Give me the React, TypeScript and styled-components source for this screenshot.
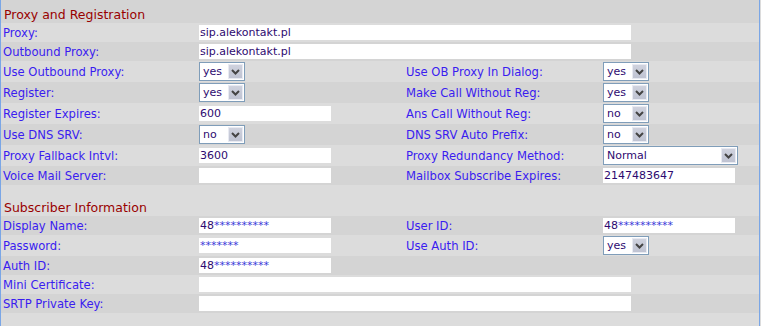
import React, { FC } from 'react';
import styled, { createGlobalStyle } from 'styled-components';

const GlobalStyle = createGlobalStyle`
  body {
    margin: 0;
    background: #dcdcdc;
    font-family: Verdana, "DejaVu Sans", sans-serif;
  }
`;

type Shade = 'dark' | 'light';

const bg = (s: Shade) => (s === 'dark' ? '#d4d4d4' : '#dcdcdc');

const Panel = styled.div`
  width: 758px;
  border-left: 1px solid #7aa6e6;
  border-right: 1px solid #7aa6e6;
  background: #dcdcdc;
  min-height: 326px;
`;

const SectionTitle = styled.div<{ $shade: Shade; $pad: number }>`
  background: ${(p) => bg(p.$shade)};
  padding: ${(p) => p.$pad}px 0 0 3px;
  height: 16px;
  font-size: 12.5px;
  line-height: 16px;
  color: #990000;
`;

const Row = styled.div<{ $shade: Shade }>`
  display: grid;
  grid-template-columns: 198px 205px 199px 1fr;
  align-items: center;
  min-height: 19px;
  box-sizing: border-box;
  padding: 1px 0;
  background: ${(p) => bg(p.$shade)};
`;

const Label = styled.div`
  font-size: 11.6px;
  color: #3a1cf0;
  padding-left: 2px;
  white-space: nowrap;
`;

const Field = styled.div<{ $wide?: boolean; $w: number }>`
  grid-column: ${(p) => (p.$wide ? 'span 2' : 'auto')};
  width: ${(p) => p.$w}px;
  height: 15px;
  background: #fff;
  font-size: 11px;
  line-height: 15px;
  color: #2e0a70;
  padding-left: 1px;
  box-sizing: border-box;
  white-space: nowrap;
  overflow: hidden;
`;

const Stars = styled.span`
  color: #3a3ad8;
`;

const SelectBox = styled.div<{ $w: number }>`
  width: ${(p) => p.$w}px;
  height: 19px;
  box-sizing: border-box;
  border: 1px solid #7f9db9;
  background: #fff;
  display: flex;
  align-items: center;
  justify-content: space-between;
  padding: 0 1px 0 3px;
  font-size: 11px;
  color: #2e0a70;
`;

const ArrowBtn = styled.div`
  width: 15px;
  height: 15px;
  box-sizing: border-box;
  border: 1px solid #e8eaf2;
  background: linear-gradient(#cfd2de, #bfc3d2);
  display: flex;
  align-items: center;
  justify-content: center;
`;

const Select: FC<{ value: string; w?: number }> = ({ value, w = 46 }) => (
  <SelectBox $w={w}>
    <span>{value}</span>
    <ArrowBtn>
      <svg width="9" height="6" viewBox="0 0 9 6">
        <path d="M1 1 L4.5 4.5 L8 1" fill="none" stroke="#444" strokeWidth="2" />
      </svg>
    </ArrowBtn>
  </SelectBox>
);

const Spacer = styled.div`
  height: 15px;
  background: #dcdcdc;
`;

const Masked: FC<{ prefix?: string; stars: number }> = ({ prefix, stars }) => (
  <>
    {prefix}
    <Stars>{'*'.repeat(stars)}</Stars>
  </>
);

export default function App() {
  return (
    <Panel>
      <GlobalStyle />
      <SectionTitle $shade="dark" $pad={7}>Proxy and Registration</SectionTitle>
      <Row $shade="light">
        <Label>Proxy:</Label>
        <Field $wide $w={432}>sip.alekontakt.pl</Field>
      </Row>
      <Row $shade="dark">
        <Label>Outbound Proxy:</Label>
        <Field $wide $w={432}>sip.alekontakt.pl</Field>
      </Row>
      <Row $shade="light">
        <Label>Use Outbound Proxy:</Label>
        <Select value="yes" />
        <Label>Use OB Proxy In Dialog:</Label>
        <Select value="yes" />
      </Row>
      <Row $shade="dark">
        <Label>Register:</Label>
        <Select value="yes" />
        <Label>Make Call Without Reg:</Label>
        <Select value="yes" />
      </Row>
      <Row $shade="light">
        <Label>Register Expires:</Label>
        <Field $w={132}>600</Field>
        <Label>Ans Call Without Reg:</Label>
        <Select value="no" />
      </Row>
      <Row $shade="dark">
        <Label>Use DNS SRV:</Label>
        <Select value="no" />
        <Label>DNS SRV Auto Prefix:</Label>
        <Select value="no" />
      </Row>
      <Row $shade="light">
        <Label>Proxy Fallback Intvl:</Label>
        <Field $w={132}>3600</Field>
        <Label>Proxy Redundancy Method:</Label>
        <Select value="Normal" w={135} />
      </Row>
      <Row $shade="dark">
        <Label>Voice Mail Server:</Label>
        <Field $w={132} />
        <Label>Mailbox Subscribe Expires:</Label>
        <Field $w={132}>2147483647</Field>
      </Row>
      <Spacer />
      <SectionTitle $shade="light" $pad={0}>Subscriber Information</SectionTitle>
      <Row $shade="dark">
        <Label>Display Name:</Label>
        <Field $w={132}><Masked prefix="48" stars={10} /></Field>
        <Label>User ID:</Label>
        <Field $w={132}><Masked prefix="48" stars={10} /></Field>
      </Row>
      <Row $shade="light">
        <Label>Password:</Label>
        <Field $w={132}><Masked stars={7} /></Field>
        <Label>Use Auth ID:</Label>
        <Select value="yes" />
      </Row>
      <Row $shade="dark">
        <Label>Auth ID:</Label>
        <Field $w={132}><Masked prefix="48" stars={10} /></Field>
      </Row>
      <Row $shade="light">
        <Label>Mini Certificate:</Label>
        <Field $wide $w={432} />
      </Row>
      <Row $shade="dark">
        <Label>SRTP Private Key:</Label>
        <Field $wide $w={432} />
      </Row>
    </Panel>
  );
}
